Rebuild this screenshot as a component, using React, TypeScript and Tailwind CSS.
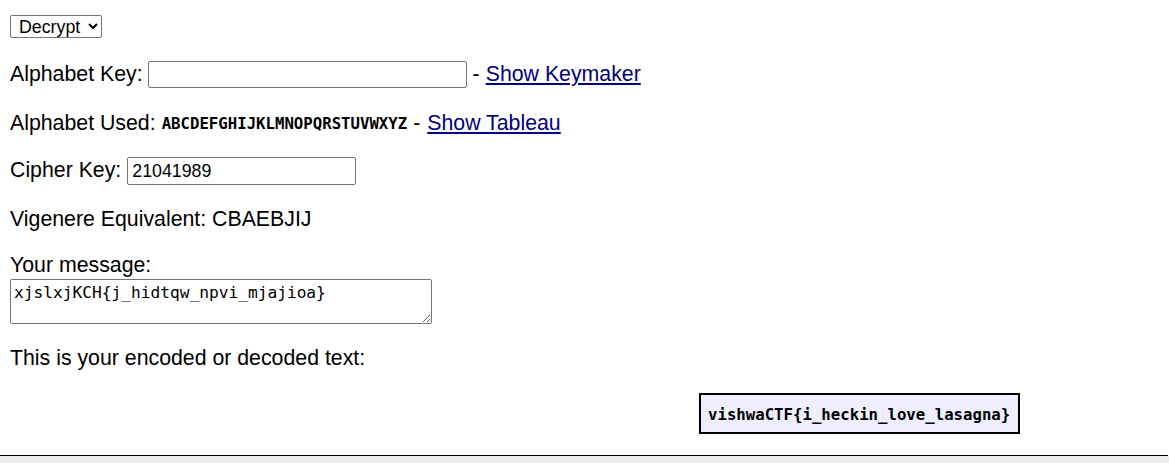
import { useState } from 'react';

const mono = "font-['DejaVu_Sans_Mono','Liberation_Mono',monospace]";

export default function App() {
  const [mode, setMode] = useState('Decrypt');
  const [message, setMessage] = useState('xjslxjKCH{j_hidtqw_npvi_mjajioa}');

  return (
    <div className="flex h-[463px] w-full flex-col bg-white font-['Liberation_Sans',Arial,sans-serif] text-[21.3px] text-black">
      <div className="flex flex-col pl-[10px] pt-[15px]">
        {/* Mode select */}
        <select
          value={mode}
          onChange={(e) => setMode(e.target.value)}
          className="h-[23px] w-[92px] rounded-[2px] border border-[#767676] bg-white pl-[4px] text-[17.8px] leading-none"
        >
          <option>Decrypt</option>
          <option>Encrypt</option>
        </select>

        {/* Alphabet key */}
        <div className="mt-[23px] flex h-[27px] items-center">
          <span>Alphabet Key:</span>
          <input className="ml-[5px] h-[27px] w-[319px] rounded-[2px] border border-[#767676] px-[3px] text-[17.8px]" />
          <span className="ml-[6px]">-</span>
          <a href="#" className="ml-[6px] text-[#000080] underline">
            Show Keymaker
          </a>
        </div>

        {/* Alphabet used */}
        <div className="mt-[23px] flex h-[25px] items-center">
          <span>Alphabet Used:</span>
          <span className={`ml-[6px] text-[15.7px] font-bold ${mono}`}>ABCDEFGHIJKLMNOPQRSTUVWXYZ</span>
          <span className="ml-[6px]">-</span>
          <a href="#" className="ml-[7px] text-[#000080] underline">
            Show Tableau
          </a>
        </div>

        {/* Cipher key */}
        <div className="mt-[21px] flex h-[28px] items-center">
          <span>Cipher Key:</span>
          <input
            defaultValue="21041989"
            className="ml-[6px] h-[28px] w-[229px] rounded-[2px] border border-[#767676] px-[4px] text-[17.8px]"
          />
        </div>

        <div className="mt-[22px] flex h-[25px] items-center">Vigenere Equivalent: CBAEBJIJ</div>

        {/* Message */}
        <div className="mt-[21px] flex h-[25px] items-center">Your message:</div>
        <textarea
          value={message}
          onChange={(e) => setMessage(e.target.value)}
          className={`mt-[1px] h-[45px] w-[422px] rounded-[2px] border border-[#767676] px-[3px] pb-[2px] pt-[3px] text-[16.2px] leading-[20px] ${mono}`}
        />

        <div className="mt-[22px] flex h-[25px] items-center">This is your encoded or decoded text:</div>

        {/* Output */}
        <div className="ml-[689px] mt-[22px] flex h-[41px] w-[321px] items-center border-2 border-black bg-[#eeeeff] pl-[7px]">
          <span className={`pt-[3px] text-[15.7px] font-bold ${mono}`}>vishwaCTF{'{'}i_heckin_love_lasagna{'}'}</span>
        </div>
      </div>

      <div className="mt-[21px] h-[1px] w-[1168px] bg-black" />
      <div className="flex-1 bg-[#ececec]" />
    </div>
  );
}
